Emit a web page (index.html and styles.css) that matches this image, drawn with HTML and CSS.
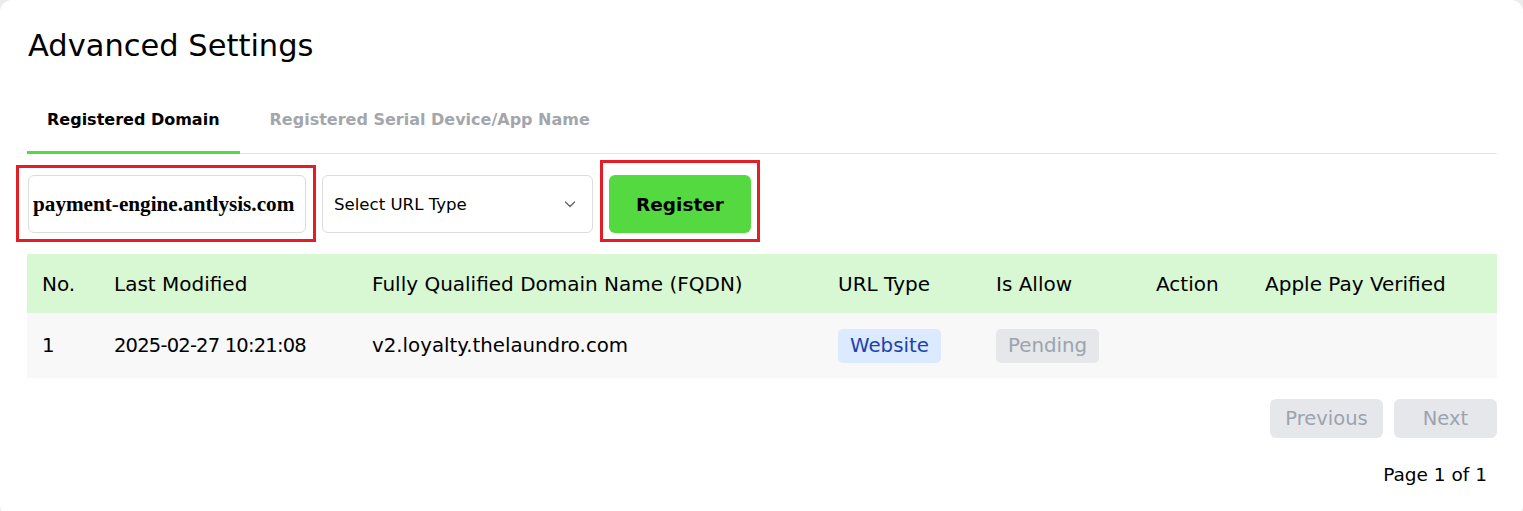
FILE: index.html
```html
<!DOCTYPE html>
<html lang="en">
<head>
  <meta charset="UTF-8">
  <meta name="viewport" content="width=device-width, initial-scale=1.0">
  <title>Advanced Settings</title>
  <link rel="stylesheet" href="styles.css">
</head>
<body>
  <div class="card">
    <h1 class="title">Advanced Settings</h1>

    <!-- Tabs -->
    <div class="tabs">
      <div class="tab active">Registered Domain</div>
      <div class="tab">Registered Serial Device/App Name</div>
    </div>

    <!-- Register form -->
    <div class="form-row">
      <div class="field-wrap">
        <input class="domain-input" type="text" value="payment-engine.antlysis.com">
        <span class="mark mark-input"></span>
      </div>
      <div class="select">
        <span>Select URL Type</span>
        <svg class="chevron" width="16" height="16" viewBox="0 0 16 16" fill="none" stroke="#666" stroke-width="1.4" stroke-linecap="round" stroke-linejoin="round">
          <path d="M3.5 6 L8 10.5 L12.5 6"/>
        </svg>
      </div>
      <div class="field-wrap">
        <button class="btn-register">Register</button>
        <span class="mark mark-button"></span>
      </div>
    </div>

    <!-- Domains table -->
    <table class="domains">
      <thead>
        <tr>
          <th class="col-no">No.</th>
          <th class="col-date">Last Modified</th>
          <th class="col-fqdn">Fully Qualified Domain Name (FQDN)</th>
          <th class="col-type">URL Type</th>
          <th class="col-allow">Is Allow</th>
          <th class="col-action">Action</th>
          <th class="col-apple">Apple Pay Verified</th>
        </tr>
      </thead>
      <tbody>
        <tr>
          <td>1</td>
          <td class="cell-date">2025-02-27 10:21:08</td>
          <td>v2.loyalty.thelaundro.com</td>
          <td><span class="badge badge-blue">Website</span></td>
          <td><span class="badge badge-gray">Pending</span></td>
          <td></td>
          <td></td>
        </tr>
      </tbody>
    </table>

    <div class="pager">
      <button class="btn-page btn-prev">Previous</button>
      <button class="btn-page btn-next">Next</button>
    </div>
    <div class="page-info">Page 1 of 1</div>
  </div>
</body>
</html>
```

FILE: styles.css
```css
/* Base */
body {
  margin: 0;
  background-color: #ececec;
  color: #000;
  font-family: "DejaVu Sans", "Open Sans", sans-serif;
}

.card {
  background-color: #fff;
  border-radius: 12px;
  padding: 23px 26px 32px 27px;
  min-height: 456px;
}

.title {
  margin: 0 0 0 1px;
  font-size: 30.5px;
  font-weight: 400;
  line-height: 46px;
}

/* Tabs */
.tabs {
  display: flex;
  gap: 10px;
  margin-top: 26px;
  border-bottom: 1px solid #e5e5e5;
}

.tab {
  padding: 15px 20px 22px;
  font-size: 16px;
  font-weight: 700;
  color: #a3a6ad;
}

.tab.active {
  color: #000;
  border-bottom: 3px solid #55d941;
  margin-bottom: -1px;
}

/* Form row */
.form-row {
  display: flex;
  gap: 16px;
  margin-top: 21px;
  padding-left: 1px;
}

.field-wrap {
  position: relative;
  display: flex;
}

.domain-input {
  box-sizing: border-box;
  width: 278px;
  height: 58px;
  padding: 0 8px 0 4px;
  border: 1px solid #dcdcdc;
  border-radius: 6px;
  font-family: "Liberation Serif", serif;
  font-weight: 700;
  font-size: 21.2px;
  color: #000;
  outline: none;
}

.select {
  box-sizing: border-box;
  display: flex;
  align-items: center;
  justify-content: space-between;
  width: 271px;
  height: 58px;
  padding: 0 14px 0 11px;
  border: 1px solid #dcdcdc;
  border-radius: 6px;
  font-size: 16.6px;
}

.btn-register {
  width: 142px;
  height: 58px;
  border: none;
  border-radius: 6px;
  background-color: #55d941;
  font-family: inherit;
  font-size: 18.5px;
  font-weight: 700;
  color: #000;
}

/* Red annotation boxes */
.mark {
  position: absolute;
  border: 3px solid #e41e26;
  pointer-events: none;
}

.mark-input {
  left: -12px;
  top: -10px;
  right: -10px;
  bottom: -9px;
}

.mark-button {
  left: -9px;
  top: -15px;
  right: -9px;
  bottom: -9px;
}

/* Table */
.domains {
  width: 100%;
  margin-top: 21px;
  border-collapse: collapse;
  table-layout: fixed;
}

.domains th {
  height: 59px;
  padding: 0 0 0 15px;
  text-align: left;
  font-size: 20px;
  font-weight: 400;
  background-color: #d8f7d3;
}

.domains td {
  height: 65px;
  padding: 0 0 0 15px;
  font-size: 19.8px;
  background-color: #f8f8f8;
}

.domains td.cell-date {
  font-size: 19.5px;
  letter-spacing: -0.8px;
}

.col-no { width: 57px; }
.col-date { width: 243px; }
.col-fqdn { width: 451px; }
.col-type { width: 143px; }
.col-allow { width: 145px; }
.col-action { width: 94px; }

.badge {
  display: inline-block;
  padding: 2px 12px;
  border-radius: 5px;
  line-height: 30px;
}

.badge-blue {
  background-color: #dbeafe;
  color: #1e40af;
}

.badge-gray {
  background-color: #e5e7eb;
  color: #9ca3af;
}

/* Pagination */
.pager {
  display: flex;
  justify-content: flex-end;
  gap: 11px;
  margin-top: 21px;
}

.btn-page {
  height: 39px;
  border: none;
  border-radius: 6px;
  background-color: #e5e7eb;
  color: #9ca3af;
  font-family: inherit;
  font-size: 19.5px;
}

.btn-prev {
  width: 113px;
}

.btn-next {
  width: 103px;
}

.page-info {
  margin-top: 26px;
  padding-right: 10px;
  text-align: right;
  font-size: 18.5px;
}
```
